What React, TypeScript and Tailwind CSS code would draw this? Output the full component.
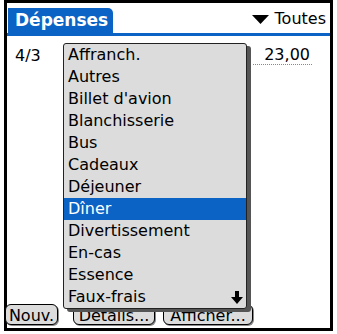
const categories = [
  "Affranch.",
  "Autres",
  "Billet d'avion",
  "Blanchisserie",
  "Bus",
  "Cadeaux",
  "Déjeuner",
  "Dîner",
  "Divertissement",
  "En-cas",
  "Essence",
  "Faux-frais",
];

const SELECTED = "Dîner";

function PalmButton({ label, width }: { label: string; width: string }) {
  return (
    <div
      className={`${width} flex h-[21px] items-center justify-center rounded-[6px] border border-black bg-[#dcdcdc] pt-[2px] text-[16px] leading-none text-black shadow-[1px_1px_0_#8a8a8a]`}
    >
      {label}
    </div>
  );
}

export default function App() {
  return (
    <div
      className="h-[334px] w-[337px] overflow-hidden bg-white text-black"
      style={{ fontFamily: '"DejaVu Sans", Verdana, sans-serif' }}
    >
      <div className="relative ml-[4px] flex h-[331px] w-[329px] flex-col border-[3px] border-black">
        {/* title bar */}
        <div className="mt-[5px] flex items-end border-b-[3px] border-[#0b63c5]">
          <div className="ml-[1px] flex h-[25px] w-[105px] items-center rounded-tr-[5px] bg-[#0b63c5] pl-[7px] text-[17px] font-bold leading-none text-white">
            Dépenses
          </div>
          <div className="flex flex-1 items-center justify-end gap-[6px] pb-[6px] pr-[4px] text-[16px] leading-none">
            <svg width="17" height="9" viewBox="0 0 17 9">
              <polygon points="0,0 17,0 8.5,9" fill="#000" />
            </svg>
            <span>Toutes</span>
          </div>
        </div>

        {/* expense row */}
        <div className="mt-[10px] flex items-start justify-between pl-[8px] pr-[18px] text-[16px] leading-[20px]">
          <span>4/3</span>
          <span className="w-[59px] border-b border-dotted border-[#888] pr-[2px] text-right leading-[18px]">
            23,00
          </span>
        </div>

        {/* bottom buttons */}
        <div className="mb-[3px] ml-[-2px] mt-auto flex items-center">
          <PalmButton label="Nouv." width="w-[53px]" />
          <div className="ml-[15px]">
            <PalmButton label="Détails..." width="w-[82px]" />
          </div>
          <div className="ml-[8px]">
            <PalmButton label="Afficher..." width="w-[90px]" />
          </div>
        </div>

        {/* category popup list */}
        <div className="absolute left-[56px] top-[40px] z-10 w-[184px] rounded-[3px] border border-[#222] bg-[#dcdcdc] shadow-[4px_3px_0_#555]">
          {categories.map((c, i) => (
            <div
              key={c}
              className={`flex h-[22px] items-center justify-between pl-[4px] pr-[3px] text-[16px] leading-none ${
                c === SELECTED ? "bg-[#0b63c5] text-white" : "text-black"
              }`}
            >
              <span>{c}</span>
              {i === categories.length - 1 && (
                <svg width="12" height="13" viewBox="0 0 12 13">
                  <rect x="4" y="0" width="4" height="7" fill="#000" />
                  <polygon points="0,6 12,6 6,13" fill="#000" />
                </svg>
              )}
            </div>
          ))}
        </div>
      </div>
    </div>
  );
}
